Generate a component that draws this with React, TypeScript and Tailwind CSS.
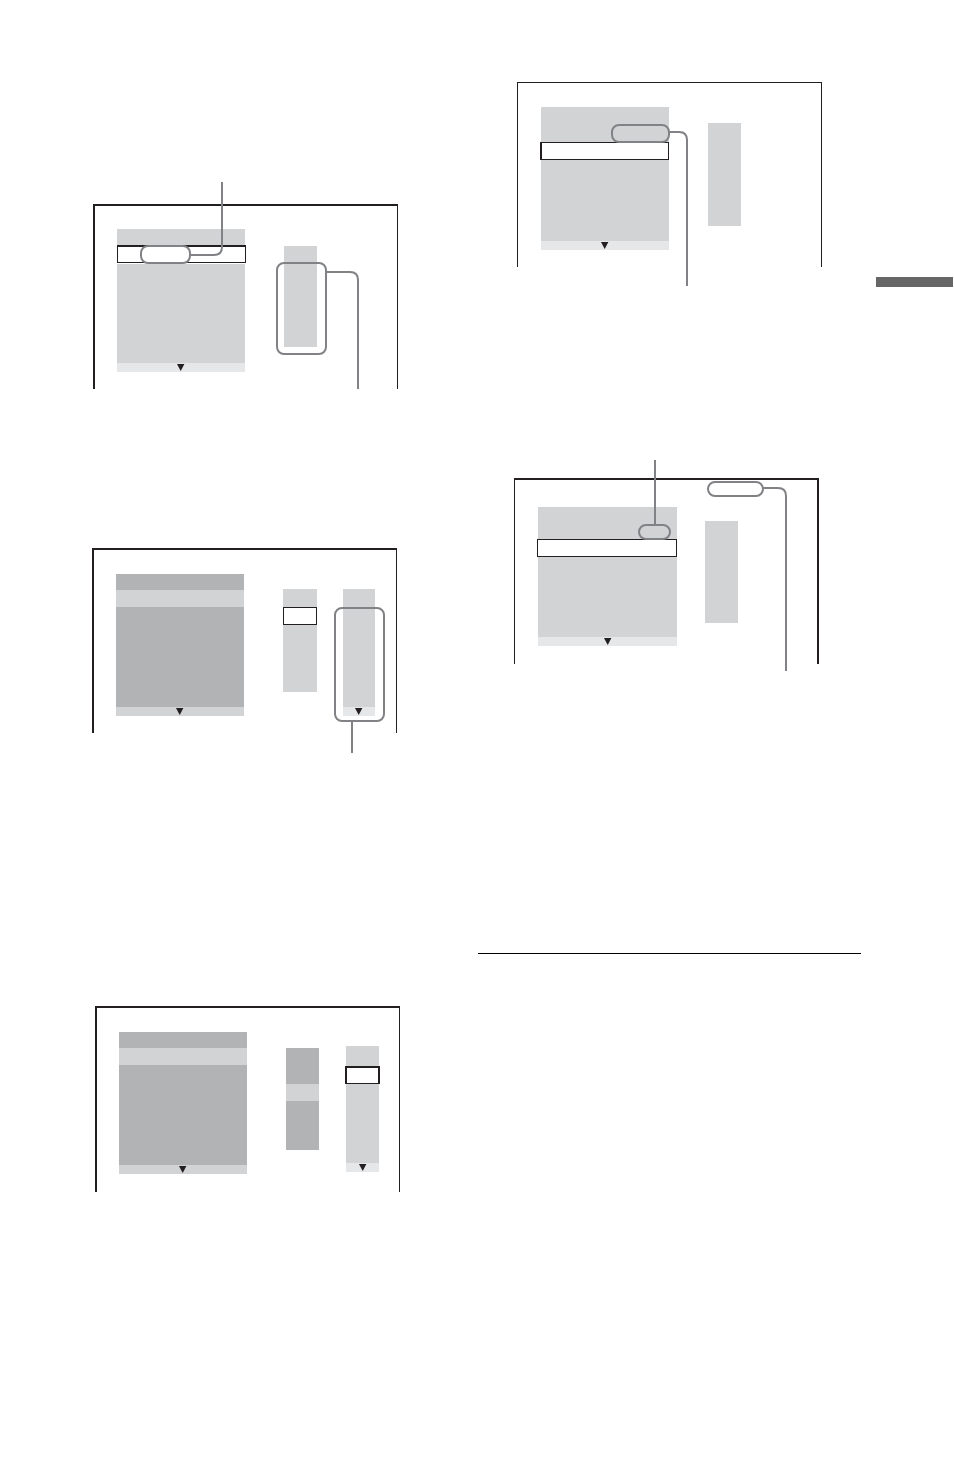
import type { ReactNode } from "react";
import clsx from "clsx";

type ScreenProps = {
  label: string;
  className: string;
  children: ReactNode;
  callouts?: ReactNode;
};

// TV screen outline, open at the bottom, with the callout lines drawn over it
function Screen({ label, className, children, callouts }: ScreenProps) {
  return (
    <figure aria-label={label} className="relative w-[305px]">
      <div className={clsx("flex items-start border-[#231f20]", className)}>{children}</div>
      {callouts && (
        <svg
          className="absolute left-0 top-0 overflow-visible"
          width="305"
          height="185"
          fill="none"
          stroke="#808285"
          strokeWidth="2"
          aria-hidden="true"
        >
          {callouts}
        </svg>
      )}
    </figure>
  );
}

function Footer({ className }: { className: string }) {
  return (
    <div className={clsx("flex h-[9px] items-center justify-center", className)}>
      <svg width="8" height="7" viewBox="0 0 8 7" aria-hidden="true">
        <path d="M0 0h7.4L3.7 7z" fill="#231f20" />
      </svg>
    </div>
  );
}

export default function App() {
  return (
    <main className="flex w-full items-start bg-white">
      {/* Left column */}
      <section className="w-1/2 shrink-0 pb-[290px] pt-[204px]">
        <div className="pl-[93px]">
          <Screen
            label="Program list"
            className="border-l-2 border-r border-t-2 pb-[17px] pl-[22px] pt-[23px]"
            callouts={
              <>
                <rect x="48" y="42" width="49" height="17" rx="7" />
                <path d="M97 51h24q8 0 8-8V-22" />
                <rect x="184" y="59" width="49" height="91" rx="7" />
                <path d="M233 68h24q8 0 8 8v109" />
              </>
            }
          >
            <div className="w-[128px]">
              <div className="h-4 bg-[#d1d3d4]" />
              <div className="-mr-px mb-px h-[18px] border border-t-2 border-[#231f20] bg-white" />
              <div className="h-[99px] bg-[#d1d3d4]" />
              <Footer className="bg-[#e6e7e8]" />
            </div>
            <div className="ml-[39px] mt-[17px] h-[101px] w-[33px] bg-[#d1d3d4]" />
          </Screen>
        </div>

        <div className="pl-[92px] pt-[159px]">
          <Screen
            label="Edit menu"
            className="border-l-2 border-r border-t-2 pb-[17px] pl-[22px] pt-6"
            callouts={
              <>
                <rect x="243" y="60" width="49" height="113" rx="7" />
                <path d="M260 173v32" />
              </>
            }
          >
            <div className="w-[128px]">
              <div className="h-4 bg-[#b1b3b5]" />
              <div className="h-[17px] bg-[#d1d3d4]" />
              <div className="h-[100px] bg-[#b1b3b5]" />
              <Footer className="bg-[#d1d3d4]" />
            </div>
            <div className="ml-[39px] mt-[15px] w-[34px]">
              <div className="h-[18px] bg-[#d1d3d4]" />
              <div className="h-[18px] border border-[#231f20] bg-white" />
              <div className="h-[67px] bg-[#d1d3d4]" />
            </div>
            <div className="ml-[26px] mt-[15px] w-8">
              <div className="h-[118px] bg-[#d1d3d4]" />
              <Footer className="bg-[#e6e7e8]" />
            </div>
          </Screen>
        </div>

        <div className="pl-[95px] pt-[273px]">
          <Screen
            label="Track selection"
            className="border-l-2 border-r border-t-2 pb-[18px] pl-[22px] pt-6"
          >
            <div className="w-[128px]">
              <div className="h-4 bg-[#b1b3b5]" />
              <div className="h-[17px] bg-[#d1d3d4]" />
              <div className="h-[100px] bg-[#b1b3b5]" />
              <Footer className="bg-[#d1d3d4]" />
            </div>
            <div className="ml-[39px] mt-4 w-[33px]">
              <div className="h-9 bg-[#b1b3b5]" />
              <div className="h-[17px] bg-[#d1d3d4]" />
              <div className="h-[49px] bg-[#b1b3b5]" />
            </div>
            <div className="ml-[27px] mt-[14px] w-[33px]">
              <div className="h-5 bg-[#d1d3d4]" />
              <div className="-mx-px h-[18px] border-2 border-b border-[#231f20] bg-white" />
              <div className="h-[79px] bg-[#d1d3d4]" />
              <Footer className="bg-[#e6e7e8]" />
            </div>
          </Screen>
        </div>
      </section>

      {/* Right column */}
      <section className="flex-1 pl-px pr-[15px] pt-[82px]">
        <div className="pl-[39px]">
          <Screen
            label="Programmed track"
            className="border-x border-t pb-[17px] pl-[23px] pt-6"
            callouts={
              <>
                <rect x="95" y="43" width="57" height="17" rx="7" />
                <path d="M152 50h10q8 0 8 8v146" />
              </>
            }
          >
            <div className="w-[128px]">
              <div className="h-[35px] bg-[#d1d3d4]" />
              <div className="-ml-px h-[18px] border border-l-2 border-[#231f20] bg-white" />
              <div className="h-[81px] bg-[#d1d3d4]" />
              <Footer className="bg-[#e6e7e8]" />
            </div>
            <div className="ml-[39px] mt-4 h-[103px] w-[33px] bg-[#d1d3d4]" />
          </Screen>
        </div>

        <div className="pl-9 pt-[211px]">
          <Screen
            label="Total time"
            className="border-l border-r-2 border-t-2 pb-[18px] pl-[23px] pt-[27px]"
            callouts={
              <>
                <path d="M141-18v64" />
                <rect x="125" y="47" width="31" height="14" rx="7" />
                <rect x="194" y="4" width="55" height="14" rx="7" />
                <path d="M249 10h15q8 0 8 8v175" />
              </>
            }
          >
            <div className="w-[139px]">
              <div className="h-8 bg-[#d1d3d4]" />
              <div className="-ml-px h-[18px] border border-[#231f20] bg-white" />
              <div className="h-20 bg-[#d1d3d4]" />
              <Footer className="bg-[#e6e7e8]" />
            </div>
            <div className="ml-7 mt-[14px] h-[102px] w-[33px] bg-[#d1d3d4]" />
          </Screen>
        </div>

        <hr className="mt-[289px] border-t border-black" />
      </section>

      {/* Chapter tab on the page edge */}
      <aside className="mr-px mt-[277px] h-[10px] w-[77px] shrink-0 bg-[#666666]" />
    </main>
  );
}
